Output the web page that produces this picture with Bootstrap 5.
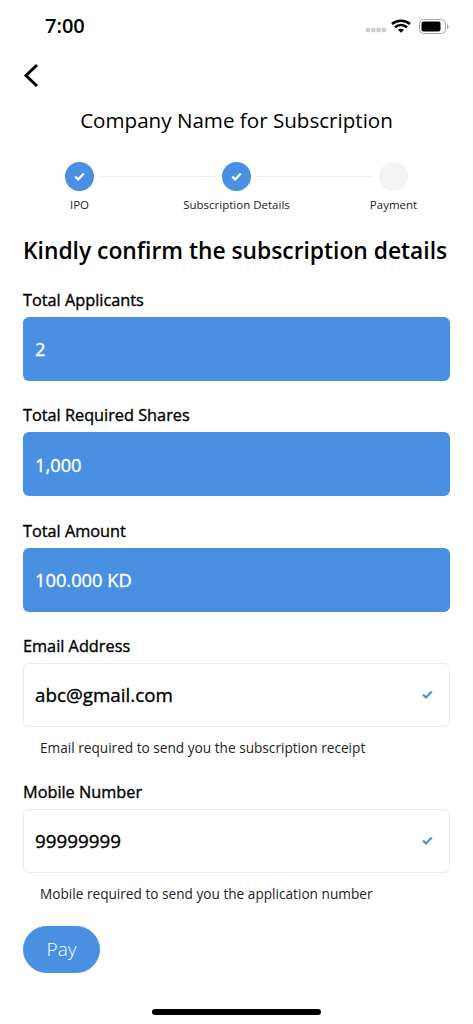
<!DOCTYPE html>
<html lang="en">
<head>
<meta charset="utf-8">
<meta name="viewport" content="width=device-width, initial-scale=1">
<title>Subscription</title>
<link href="https://cdn.jsdelivr.net/npm/bootstrap@5.3.0/dist/css/bootstrap.min.css" rel="stylesheet">
<style>
html,body{height:1024px;overflow:hidden}
body{font-family:"Open Sans",sans-serif;color:#000;background:#fff}
.phone{width:473px;height:1024px}
.statusbar{height:52px;padding:0 24px 0 45px}
.clock{font-size:20px;font-weight:600;line-height:52px}
.backrow{height:46px;padding-left:23px}
.screen-title{font-size:20.6px;font-weight:400;line-height:30px;margin:7px 0 27px;text-align:center}
.stepper{margin-left:1px}
.step-col{width:157px;flex:none}
.dot{width:29px;height:29px;border-radius:50%;background:#4a90e2;z-index:1}
.dot-off{background:#f4f4f4}
.step-line{height:1px;background:#f0f0f0;width:117px;top:14px;left:98px}
.line-two{left:255px}
.step-name{font-size:11.5px;line-height:17px;margin-top:5px;color:#222}
.step-wrap{height:51px}
.ask{font-size:22.8px;font-weight:600;line-height:30px;margin:23px 0 0 23px;white-space:nowrap}
.fields{padding:0 23px;margin-top:23px}
.lbl{font-size:16.3px;font-weight:400;-webkit-text-stroke:.35px #000;line-height:22px;height:22px;margin:0 0 6px}
.box{height:64px;border-radius:6px;padding:0 12px;font-size:18.3px;margin-bottom:23.33px}
.box-filled{background:#4a90e2;color:#fff;font-weight:400;-webkit-text-stroke:.35px #fff}
.box-plain{background:#fff;border:1px solid #ececec;color:#000;font-weight:400;-webkit-text-stroke:.35px #000;font-size:18.8px;margin-bottom:0;padding:0 11px}
.tick{margin-right:5px}
.hint{font-size:13.65px;line-height:20px;margin:11px 0 0 17px;color:#222;height:43px}
.hint-last{height:42px}
.pay{width:77px;height:47px;border-radius:24px;background:#4a90e2;border-color:#4a90e2;color:#fff;font-size:19px;font-weight:300;padding:0}
.pay:hover{background:#4a90e2;border-color:#4a90e2;color:#fff}
.homebar{width:169px;height:6px;border-radius:3px;background:#000;margin:36px auto 0}
</style>
</head>
<body>
<div class="phone d-flex flex-column">
  <div class="statusbar d-flex justify-content-between align-items-center">
    <span class="clock">7:00</span>
    <span class="d-flex align-items-center">
      <svg width="22" height="6" viewBox="0 0 22 6" class="me-1 mt-2"><g fill="#ccc"><circle cx="3" cy="3" r="2.4"/><circle cx="8.3" cy="3" r="2.4"/><circle cx="13.6" cy="3" r="2.4"/><circle cx="18.9" cy="3" r="2.4"/></g></svg>
      <svg width="20" height="14" viewBox="0 0 20 14"><g fill="none" stroke="#000" stroke-width="2.6"><path d="M1 5C6 .6 14 .6 19 5"/><path d="M4 8.2c3.4-3 8.6-3 12 0"/></g><path d="M7 10.800c1.800-1.500 4.200-1.500 6 0l-3 3z" fill="#000"/></svg>
      <svg width="30" height="15" viewBox="0 0 30 15" class="ms-2"><rect x=".5" y=".5" width="26" height="14" rx="4" fill="#fff" stroke="#aaa"/><rect x="2.500" y="2.500" width="19" height="10" rx="2" fill="#000"/><path d="M28 5v5c1-.3 1.600-1.300 1.600-2.500S29 5.300 28 5z" fill="#aaa"/></svg>
    </span>
  </div>
  <div class="backrow d-flex align-items-center">
    <svg width="16" height="25" viewBox="0 0 16 25"><path d="M14 2 3 12.500 14 23" fill="none" stroke="#000" stroke-width="3"/></svg>
  </div>
  <h1 class="screen-title">Company Name for Subscription</h1>
  <div class="stepper d-flex position-relative step-wrap">
    <div class="step-col d-flex flex-column align-items-center">
      <span class="dot d-flex align-items-center justify-content-center"><svg width="11" height="9" viewBox="0 0 11 9"><path d="M1.200 4.600 4.200 7.400 9.800 1.600" fill="none" stroke="#fff" stroke-width="2.200"/></svg></span>
      <span class="step-name">IPO</span>
    </div>
    <div class="step-col d-flex flex-column align-items-center">
      <span class="dot d-flex align-items-center justify-content-center"><svg width="11" height="9" viewBox="0 0 11 9"><path d="M1.200 4.600 4.200 7.400 9.800 1.600" fill="none" stroke="#fff" stroke-width="2.200"/></svg></span>
      <span class="step-name">Subscription Details</span>
    </div>
    <div class="step-col d-flex flex-column align-items-center">
      <span class="dot dot-off"></span>
      <span class="step-name">Payment</span>
    </div>
    <span class="step-line position-absolute"></span>
    <span class="step-line position-absolute line-two"></span>
  </div>
  <h2 class="ask">Kindly confirm the subscription details</h2>
  <div class="fields">
    <p class="lbl">Total Applicants</p>
    <div class="box box-filled d-flex align-items-center">2</div>
    <p class="lbl">Total Required Shares</p>
    <div class="box box-filled d-flex align-items-center">1,000</div>
    <p class="lbl">Total Amount</p>
    <div class="box box-filled d-flex align-items-center">100.000 KD</div>
    <p class="lbl">Email Address</p>
    <div class="box box-plain d-flex align-items-center justify-content-between">
      <span>abc@gmail.com</span>
      <svg class="tick" width="11" height="9" viewBox="0 0 11 9"><path d="M1 4.600 4 7.400 9.800 1.400" fill="none" stroke="#4a90e2" stroke-width="2.200"/></svg>
    </div>
    <p class="hint">Email required to send you the subscription receipt</p>
    <p class="lbl">Mobile Number</p>
    <div class="box box-plain d-flex align-items-center justify-content-between">
      <span>99999999</span>
      <svg class="tick" width="11" height="9" viewBox="0 0 11 9"><path d="M1 4.600 4 7.400 9.800 1.400" fill="none" stroke="#4a90e2" stroke-width="2.200"/></svg>
    </div>
    <p class="hint hint-last">Mobile required to send you the application number</p>
    <button type="button" class="btn pay">Pay</button>
  </div>
  <div class="homebar"></div>
</div>
<script src="https://cdn.jsdelivr.net/npm/bootstrap@5.3.0/dist/js/bootstrap.bundle.min.js"></script>
</body>
</html>
